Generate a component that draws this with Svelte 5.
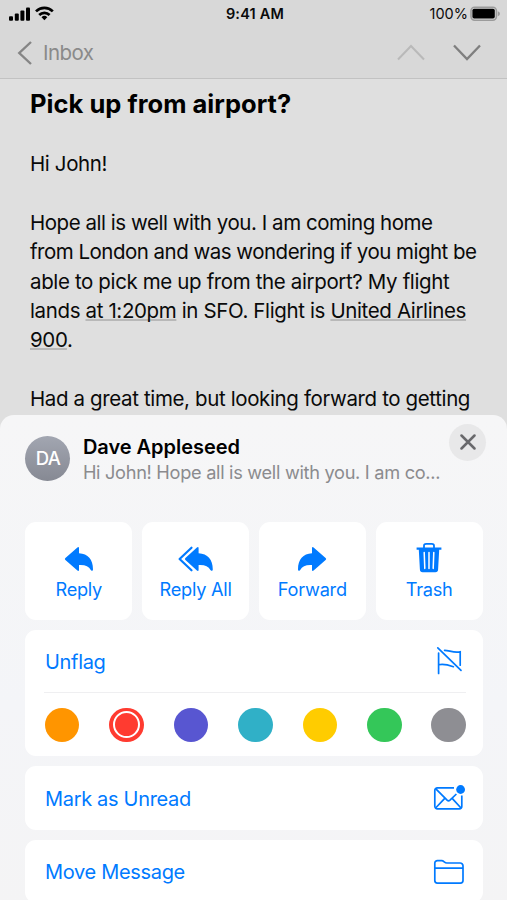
<script>
     let selected = $state('red');

     const flags = [
          { name: 'orange', color: '#ff9500' },
          { name: 'red', color: '#ff3b30' },
          { name: 'purple', color: '#5856d1' },
          { name: 'teal', color: '#30b0c7' },
          { name: 'yellow', color: '#ffcc00' },
          { name: 'green', color: '#34c759' },
          { name: 'gray', color: '#8e8e93' }
     ];
</script>

<div class="phone">
     <div class="top">
          <div class="status">
               <div class="side">
                    <svg width="46" height="16" viewBox="0 0 46 16">
                         <rect x="0" y="10.2" width="4" height="4.6" rx="1"/>
                         <rect x="5.8" y="7.6" width="4" height="7.2" rx="1"/>
                         <rect x="11.4" y="4.6" width="4" height="10.2" rx="1"/>
                         <rect x="17" y="1.4" width="4" height="13.4" rx="1"/>
                         <g fill="none" stroke="#000" stroke-width="2.7">
                              <path d="M27 5.4a12 12 0 0 1 16.8 0"/>
                              <path d="M30.2 9a7.4 7.4 0 0 1 10.4 0"/>
                         </g>
                         <path d="M35.4 14.2l-2.9-3a4.2 4.2 0 0 1 5.8 0z"/>
                    </svg>
               </div>
               <b>9:41 AM</b>
               <div class="side right">
                    <span>100%</span>
                    <svg width="31" height="16" viewBox="0 0 31 16">
                         <rect x="1" y="1.2" width="25.4" height="13" rx="3.6" fill="none" stroke="#9b9b9b" stroke-width="1.6"/>
                         <rect x="2.4" y="2.8" width="22.4" height="9.8" rx="1.8"/>
                         <path d="M27.8 5.3v5c2.8-1 2.8-4 0-5z" fill="#9b9b9b"/>
                    </svg>
               </div>
          </div>
          <div class="nav">
               <svg width="16" height="24" viewBox="0 0 16 24" fill="none" stroke="#858585" stroke-width="2.4"><path d="M14 1L2.3 12 14 23"/></svg>
               <span class="back">Inbox</span>
               <svg class="up" width="28" height="17" viewBox="0 0 28 17" fill="none" stroke="#b9b9b9" stroke-width="2"><path d="M1 15.5L14 2l13 13.5"/></svg>
               <svg width="28" height="17" viewBox="0 0 28 17" fill="none" stroke="#7f7f7f" stroke-width="2.3"><path d="M1 1.5L14 15 27 1.5"/></svg>
          </div>
     </div>

     <div class="mail">
          <h1>Pick up from airport?</h1>
          <p>Hi John!</p>
          <p>
               <span class="snug">Hope all is well with you. I am coming home</span><br>
               <span class="tight">from London and was wondering if you might be</span><br>
               able to pick me up from the airport? My flight<br>
               lands <u>at 1:20pm</u> in SFO. Flight is <u>United Airlines</u><br>
               <u>900</u>.
          </p>
          <p>Had a great time, but looking forward to getting</p>
     </div>

     <div class="sheet">
          <div class="sender">
               <div class="avatar">DA</div>
               <div class="who">
                    <div class="name">Dave Appleseed</div>
                    <div class="preview">Hi John! Hope all is well with you. I am co...</div>
               </div>
               <button class="close" aria-label="Close">
                    <svg width="16" height="16" viewBox="0 0 16 16" fill="none" stroke="#69696c" stroke-width="2.5" stroke-linecap="round"><path d="M1.5 1.5l13 13M14.5 1.5l-13 13"/></svg>
               </button>
          </div>

          <div class="actions">
               <button>
                    <svg width="30" height="32" viewBox="0 0 30 32"><path d="M1.4 15.1Q.2 16 1.4 17L13.4 27.6Q15 28.6 15 26.7V22C21 21.6 24.8 23.2 26.8 27Q28.8 29 29 26.4C29 16.6 24 10.6 15 10.3V5.4Q15 3.3 13.4 4.6z"/></svg>
                    <span>Reply</span>
               </button>
               <button>
                    <svg width="36" height="32" viewBox="0 0 36 32">
                         <path d="M7.4 15.1Q6.4 16 7.4 17L18.9 27.6Q20.6 28.6 20.6 26.7V22C26.6 21.6 30.4 23.2 32.4 27Q34.6 29 34.8 26.4C34.8 16.6 29.6 10.6 20.6 10.3V5.4Q20.6 3.3 18.9 4.6z"/>
                         <path d="M13.5 4.7L1.6 16l11.9 11.3" fill="none" stroke="#007aff" stroke-width="2.2" stroke-linecap="round" stroke-linejoin="round"/>
                    </svg>
                    <span>Reply All</span>
               </button>
               <button>
                    <svg class="flip" width="30" height="32" viewBox="0 0 30 32"><path d="M1.4 15.1Q.2 16 1.4 17L13.4 27.6Q15 28.6 15 26.7V22C21 21.6 24.8 23.2 26.8 27Q28.8 29 29 26.4C29 16.6 24 10.6 15 10.3V5.4Q15 3.3 13.4 4.6z"/></svg>
                    <span>Forward</span>
               </button>
               <button>
                    <svg width="26" height="32" viewBox="0 0 26 32">
                         <path d="M8 5V2.8Q8 .9 10.2 .9h5.6Q18 .9 18 2.8V5" fill="none" stroke="#007aff" stroke-width="1.8"/>
                         <path d="M.6 4.6h24.8v2.2h-2.2l-1.1 19.8Q22 29.2 19.4 29.2H6.6Q4 29.2 3.9 26.6L2.8 6.8H.6z"/>
                         <path d="M8.2 9.4l.6 16M13 9.4v16M17.8 9.4l-.6 16" stroke="#fff" stroke-width="1.5" stroke-linecap="round"/>
                    </svg>
                    <span>Trash</span>
               </button>
          </div>

          <div class="card">
               <div class="row flag">
                    <span>Unflag</span>
                    <svg width="30" height="30" viewBox="0 0 30 30" fill="none" stroke="#007aff" stroke-width="1.7" stroke-linecap="round">
                         <path d="M4.6 7v20.4M3.8 1.8L27 24.4M10.6 4.3c5 .2 9 2.8 15.6 1.5v13.4M4.6 18.8c5-1.4 10.5.4 14.8 1.9"/>
                    </svg>
               </div>
               <div class="colors">
                    {#each flags as flag}
                         <button
                              class="dot"
                              class:selected={selected == flag.name}
                              style="background-color: {flag.color}"
                              aria-label={flag.name}
                              onclick={() => selected = flag.name}
                         ></button>
                    {/each}
               </div>
          </div>

          <div class="card row">
               <span>Mark as Unread</span>
               <svg width="34" height="30" viewBox="0 0 34 30" fill="none" stroke="#007aff" stroke-width="1.7">
                    <path d="M22 4.8H5.4a2.6 2.6 0 0 0-2.6 2.6v15.8a2.6 2.6 0 0 0 2.6 2.6h21.8a2.6 2.6 0 0 0 2.6-2.6V12.6"/>
                    <path d="M3.6 5.6l11.5 11.6q1.4 1.3 2.9 0L24.4 11M3.6 25l8.9-9.4M29 25l-8.6-9.4"/>
                    <circle cx="28.6" cy="6.5" r="4.4" fill="#007aff" stroke="none"/>
               </svg>
          </div>

          <div class="card row">
               <span>Move Message</span>
               <svg width="34" height="30" viewBox="0 0 34 30" fill="none" stroke="#007aff" stroke-width="1.7">
                    <path d="M2.8 23.6V6.2a2.6 2.6 0 0 1 2.6-2.6h4.2c2.4 0 2.8 2.4 5.2 2.4h13.4a2.8 2.8 0 0 1 2.8 2.8v14.8a2.6 2.6 0 0 1-2.6 2.6h-23a2.6 2.6 0 0 1-2.6-2.6zM2.8 11.2H31"/>
               </svg>
          </div>
     </div>
</div>

<style>
     :global(body) {
          margin: 0;
     }

     .phone {
          width: 507px;
          height: 900px;
          overflow: hidden;
          display: flex;
          flex-direction: column;
          background-color: #dfdfdf;
          font-family: Inter, 'Liberation Sans', sans-serif;
          color: #0a0a0a;
          white-space: nowrap;
     }

     button {
          border: none;
          padding: 0;
          font: inherit;
          cursor: pointer;
     }

     .top {
          box-sizing: border-box;
          height: 79px;
          flex: none;
          background-color: #d8d8d8;
          border-bottom: 1px solid #c2c2c2;
     }

     .status {
          height: 27px;
          display: flex;
          align-items: center;
          padding: 0 6px 0 9px;
          font-size: 14.5px;
     }

     .status b {
          font-weight: 600;
          letter-spacing: 0.2px;
     }

     .side {
          flex: 1;
          display: flex;
          align-items: center;
     }

     .right {
          justify-content: flex-end;
          gap: 2px;
     }

     .nav {
          height: 51px;
          display: flex;
          align-items: center;
          padding: 0 26px 0 17px;
     }

     .back {
          margin-left: 10px;
          font-size: 20.5px;
          letter-spacing: -0.55px;
          color: #8a8a8a;
     }

     .up {
          margin-left: auto;
          margin-right: 28px;
     }

     .mail {
          height: 335.5px;
          flex: none;
          padding-left: 30px;
          box-sizing: border-box;
     }

     h1 {
          margin: 0;
          padding-top: 9px;
          font-size: 25.5px;
          line-height: 32px;
          font-weight: 700;
          letter-spacing: 0.03px;
          color: #000;
     }

     p {
          margin: 0 0 29.33px;
          font-size: 20.5px;
          line-height: 29.33px;
          letter-spacing: -0.37px;
     }

     h1 + p {
          margin-top: 29.2px;
     }

     .snug {
          letter-spacing: -0.46px;
     }

     .tight {
          letter-spacing: -0.51px;
     }

     u {
          text-decoration-color: #b8b8b8;
          text-decoration-thickness: 1.5px;
          text-underline-offset: 1px;
          text-decoration-skip-ink: none;
     }

     .sheet {
          flex: 1;
          padding: 0 24.5px 0 25.4px;
          border-radius: 14px 14px 0 0;
          background: linear-gradient(#f6f6f7, #f4f5f8 60%, #f4f4f5);
     }

     .sender {
          height: 107.5px;
          display: flex;
     }

     .avatar {
          width: 45px;
          height: 45px;
          margin-top: 21px;
          border-radius: 50%;
          background: linear-gradient(#a2a6b1, #868993);
          color: #fff;
          font-size: 18.5px;
          font-weight: 500;
          line-height: 45px;
          text-align: center;
          letter-spacing: -0.8px;
     }

     .who {
          margin: 18px 0 0 12.5px;
     }

     .name {
          font-size: 20px;
          line-height: 28px;
          font-weight: 600;
          letter-spacing: -0.03px;
          color: #000;
     }

     .preview {
          font-size: 18.2px;
          line-height: 22px;
          letter-spacing: -0.3px;
          color: #8b8b8e;
     }

     .close {
          width: 37px;
          height: 37px;
          margin: 9px -3.6px 0 auto;
          border-radius: 50%;
          background-color: #e8e8e9;
          display: flex;
          align-items: center;
          justify-content: center;
     }

     .actions {
          display: grid;
          grid-template-columns: repeat(4, 1fr);
          gap: 10px;
          height: 98px;
     }

     .actions button {
          display: flex;
          flex-direction: column;
          align-items: center;
          padding-top: 21px;
          border-radius: 11px;
          background-color: #fff;
          color: #007aff;
          font-size: 18.2px;
          line-height: 24px;
          letter-spacing: -0.25px;
     }

     .actions svg {
          fill: #007aff;
          margin-bottom: 2px;
     }

     .flip {
          transform: scaleX(-1);
     }

     .card {
          margin-top: 10px;
          border-radius: 11px;
          background-color: #fff;
     }

     .row {
          box-sizing: border-box;
          height: 63.5px;
          display: flex;
          align-items: center;
          justify-content: space-between;
          padding: 0 16.4px 0 19.6px;
          font-size: 20px;
          letter-spacing: -0.32px;
          color: #007aff;
     }

     .flag {
          height: 62px;
          padding-right: 18.5px;
     }

     .row span {
          padding-top: 1px;
     }

     .colors {
          display: flex;
          justify-content: space-between;
          margin: 0 16.5px 0 18.5px;
          padding: 14.6px 0 14.4px 1px;
          border-top: 1px solid #efeff1;
     }

     .dot {
          width: 34.5px;
          height: 34.5px;
          border-radius: 50%;
     }

     .selected {
          display: flex;
          align-items: center;
          justify-content: center;
     }

     .selected::after {
          content: '';
          width: 23px;
          height: 23px;
          border: 2.5px solid #fff;
          border-radius: 50%;
     }
</style>
